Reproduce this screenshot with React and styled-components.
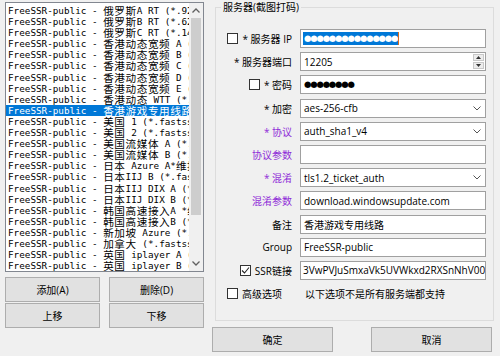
import React from 'react';
import styled, { createGlobalStyle } from 'styled-components';

const Global = createGlobalStyle`
  html, body { margin: 0; padding: 0; background: #f0f0f0; }
  body {
    font-family: "Open Sans", "Noto Sans CJK SC", sans-serif;
    font-size: 10px;
    color: #000;
  }
`;

const Window = styled.div`
  width: 500px;
  height: 356px;
  display: flex;
  background: #f0f0f0;
  overflow: hidden;
`;

const LeftPane = styled.div`
  width: 199px;
  padding: 2px 0 0 5px;
  display: flex;
  flex-direction: column;
  flex: none;
`;

const ListBox = styled.div`
  height: 270px;
  box-sizing: border-box;
  border: 1px solid #828790;
  background: #fff;
  display: flex;
`;

const ListItems = styled.div`
  flex: 1;
  min-width: 0;
  overflow: hidden;
  padding-top: 2px;
  font-family: "DejaVu Sans Mono", "Liberation Mono", monospace;
  font-size: 9.3px;
`;

const ListRow = styled.div`
  height: 11.1px;
  line-height: 11.1px;
  white-space: nowrap;
  padding-left: 2px;
  background: ${(p) => (p.$selected ? '#0078d7' : 'transparent')};
  color: ${(p) => (p.$selected ? '#fff' : '#000')};
`;

const Cjk = styled.span`
  font-family: "Noto Sans CJK SC", sans-serif;
  font-size: 10.6px;
  letter-spacing: 0.6px;
  line-height: 11px;
  vertical-align: -1px;
`;

const ScrollBar = styled.div`
  width: 14px;
  flex: none;
  background: #f0f0f0;
  display: flex;
  flex-direction: column;
  align-items: center;
`;

const ScrollArrow = styled.div`
  height: 15px;
  width: 100%;
  display: flex;
  align-items: center;
  justify-content: center;
  flex: none;
`;

const ScrollTrack = styled.div`
  flex: 1;
  width: 100%;
  display: flex;
  justify-content: center;
`;

const Thumb = styled.div`
  width: 10px;
  height: 197px;
  background: #cdcdcd;
`;

const ButtonGrid = styled.div`
  display: grid;
  grid-template-columns: 95px 95px;
  grid-auto-rows: 25px;
  column-gap: 9px;
  row-gap: 1px;
  margin-top: 5px;
`;

const Button = styled.div`
  box-sizing: border-box;
  border: 1px solid #adadad;
  background: #e1e1e1;
  display: flex;
  align-items: center;
  justify-content: center;
  font-size: 10px;
  width: ${(p) => p.$width || 'auto'};
  height: 25px;
`;

const RightPane = styled.div`
  flex: 1;
  display: flex;
  flex-direction: column;
`;

const GroupBox = styled.fieldset`
  margin: 0 0 0 11px;
  padding: 0;
  width: 279px;
  height: 321px;
  box-sizing: border-box;
  border: 1px solid #dcdcdc;
  min-width: 0;
`;

const Legend = styled.legend`
  margin-left: 5px;
  padding: 0 2px;
  font-size: 10px;
  line-height: 14px;
`;

const FormGrid = styled.div`
  display: grid;
  grid-template-columns: 76px 186px;
  column-gap: 8px;
  grid-auto-rows: 19px;
  row-gap: 4.2px;
  padding-top: 15px;
`;

const Label = styled.div`
  display: flex;
  align-items: center;
  justify-content: ${(p) => (p.$start ? 'flex-start' : 'flex-end')};
  padding-left: ${(p) => (p.$start ? '11px' : '0')};
  gap: 4px;
  white-space: nowrap;
  color: ${(p) => (p.$purple ? '#8f2bd8' : '#000')};
`;

const Check = styled.span`
  width: 11px;
  height: 11px;
  box-sizing: border-box;
  border: 1px solid #333;
  background: #fff;
  display: inline-flex;
  align-items: center;
  justify-content: center;
  flex: none;
`;

const Field = styled.div`
  box-sizing: border-box;
  border: 1px solid #a0a0a0;
  background: #fff;
  display: flex;
  align-items: center;
  padding-left: 2px;
  overflow: hidden;
  white-space: nowrap;
`;

const Value = styled.span`
  flex: 1;
  min-width: 0;
  overflow: hidden;
  white-space: nowrap;
  padding-left: ${(p) => (p.$indent ? '1px' : '0')};
`;

const Dots = styled.span`
  font-family: "DejaVu Sans", sans-serif;
  font-size: 8.5px;
  letter-spacing: ${(p) => p.$spacing || '0'};
  line-height: 13px;
  padding: 0 1px;
  background: ${(p) => (p.$selected ? '#0078d7' : 'transparent')};
  color: ${(p) => (p.$selected ? '#fff' : '#000')};
`;

const Caret = styled.span`
  width: 1px;
  height: 13px;
  background: #d86a1a;
  flex: none;
`;

const Chevron = styled.span`
  width: 12px;
  flex: none;
  display: flex;
  align-items: center;
  justify-content: flex-start;
`;

const Spin = styled.div`
  width: 11px;
  height: 15px;
  margin-right: 1px;
  display: flex;
  flex-direction: column;
  gap: 1px;
  flex: none;
`;

const SpinPart = styled.div`
  flex: 1;
  background: #ececec;
  border: 1px solid #c8c8c8;
  box-sizing: border-box;
  display: flex;
  align-items: center;
  justify-content: center;
`;

const Note = styled.div`
  display: flex;
  align-items: center;
  padding-left: 5px;
  white-space: nowrap;
`;

const ButtonRow = styled.div`
  display: flex;
  gap: 38px;
  padding-left: 8px;
  margin-top: 6px;
`;

const servers = [
  '俄罗斯A RT (*.92.fastssh.com)',
  '俄罗斯B RT (*.62.fastssh.com)',
  '俄罗斯C RT (*.14.fastssh.com)',
  '香港动态宽频 A (*.fastssh.com)',
  '香港动态宽频 B (*.fastssh.com)',
  '香港动态宽频 C (*.fastssh.com)',
  '香港动态宽频 D (*.fastssh.com)',
  '香港动态宽频 E (*.fastssh.com)',
  '香港动态 WTT (*.fastssh.com)',
  '香港游戏专用线路',
  '美国 1 (*.fastssh.com)',
  '美国 2 (*.fastssh.com)',
  '美国流媒体 A (*.fastssh.com)',
  '美国流媒体 B (*.fastssh.com)',
  '日本 Azure A*维护中',
  '日本IIJ B (*.fastssh.com)',
  '日本IIJ DIX A (*.fastssh.com)',
  '日本IIJ DIX B (*.fastssh.com)',
  '韩国高速接入A *维护中',
  '韩国高速接入B (*.fastssh.com)',
  '新加坡 Azure (*.fastssh.com)',
  '加拿大 (*.fastssh.com)',
  '英国 iplayer A (*.fastssh.com)',
  '英国 iplayer B (*.fastssh.com)',
];

const MonoText = ({ text }) =>
  text
    .split(/([\u3000-\u9fff\uff00-\uffef]+)/)
    .map((part, i) => (i % 2 === 1 ? <Cjk key={i}>{part}</Cjk> : <React.Fragment key={i}>{part}</React.Fragment>));

const CheckMark = () => (
  <svg width="9" height="9" viewBox="0 0 9 9">
    <polyline points="1,4.5 3.5,7 8,1.5" fill="none" stroke="#222" strokeWidth="1.1" />
  </svg>
);

const Box = ({ checked }) => <Check>{checked && <CheckMark />}</Check>;

const Down = () => (
  <Chevron>
    <svg width="8" height="5" viewBox="0 0 8 5">
      <polyline points="0.5,0.5 4,4 7.5,0.5" fill="none" stroke="#555" strokeWidth="1" />
    </svg>
  </Chevron>
);

export default function App() {
  return (
    <>
      <Global />
      <Window>
        <LeftPane>
          <ListBox>
            <ListItems>
              {servers.map((s, i) => (
                <ListRow key={i} $selected={i === 9}>
                  <MonoText text={`FreeSSR-public - ${s}`} />
                </ListRow>
              ))}
            </ListItems>
            <ScrollBar>
              <ScrollArrow>
                <svg width="8" height="5" viewBox="0 0 8 5">
                  <polyline points="0.5,4.5 4,1 7.5,4.5" fill="none" stroke="#606060" strokeWidth="1.3" />
                </svg>
              </ScrollArrow>
              <ScrollTrack>
                <Thumb />
              </ScrollTrack>
              <ScrollArrow>
                <svg width="8" height="5" viewBox="0 0 8 5">
                  <polyline points="0.5,0.5 4,4 7.5,0.5" fill="none" stroke="#606060" strokeWidth="1.3" />
                </svg>
              </ScrollArrow>
            </ScrollBar>
          </ListBox>
          <ButtonGrid>
            <Button>添加(A)</Button>
            <Button>删除(D)</Button>
            <Button>上移</Button>
            <Button>下移</Button>
          </ButtonGrid>
        </LeftPane>

        <RightPane>
          <GroupBox>
            <Legend>服务器(截图打码)</Legend>
            <FormGrid>
              <Label>
                <Box />
                <span>* 服务器 IP</span>
              </Label>
              <Field>
                <Dots $selected $spacing="-1.2px">●●●●●●●●●●●●●●●</Dots>
                <Caret />
              </Field>

              <Label>* 服务器端口</Label>
              <Field>
                <Value $indent>12205</Value>
                <Spin>
                  <SpinPart>
                    <svg width="5" height="3" viewBox="0 0 5 3">
                      <polygon points="0,3 2.5,0 5,3" fill="#333" />
                    </svg>
                  </SpinPart>
                  <SpinPart>
                    <svg width="5" height="3" viewBox="0 0 5 3">
                      <polygon points="0,0 2.5,3 5,0" fill="#333" />
                    </svg>
                  </SpinPart>
                </Spin>
              </Field>

              <Label>
                <Box />
                <span>* 密码</span>
              </Label>
              <Field>
                <Dots $spacing="-1.2px">●●●●●●●●</Dots>
              </Field>

              <Label>* 加密</Label>
              <Field>
                <Value $indent>aes-256-cfb</Value>
                <Down />
              </Field>

              <Label $purple>* 协议</Label>
              <Field>
                <Value $indent>auth_sha1_v4</Value>
                <Down />
              </Field>

              <Label $purple>协议参数</Label>
              <Field>
                <Value $indent />
              </Field>

              <Label $purple>* 混淆</Label>
              <Field>
                <Value $indent>tls1.2_ticket_auth</Value>
                <Down />
              </Field>

              <Label $purple>混淆参数</Label>
              <Field>
                <Value $indent>download.windowsupdate.com</Value>
              </Field>

              <Label>备注</Label>
              <Field>
                <Value $indent>香港游戏专用线路</Value>
              </Field>

              <Label>Group</Label>
              <Field>
                <Value $indent>FreeSSR-public</Value>
              </Field>

              <Label>
                <Box checked />
                <span>SSR链接</span>
              </Label>
              <Field>
                <Value>3VwPVJuSmxaVk5UVWkxd2RXSnNhV00</Value>
              </Field>

              <Label $start>
                <Box />
                <span>高级选项</span>
              </Label>
              <Note>以下选项不是所有服务端都支持</Note>
            </FormGrid>
          </GroupBox>
          <ButtonRow>
            <Button $width="121px">确定</Button>
            <Button $width="121px">取消</Button>
          </ButtonRow>
        </RightPane>
      </Window>
    </>
  );
}
